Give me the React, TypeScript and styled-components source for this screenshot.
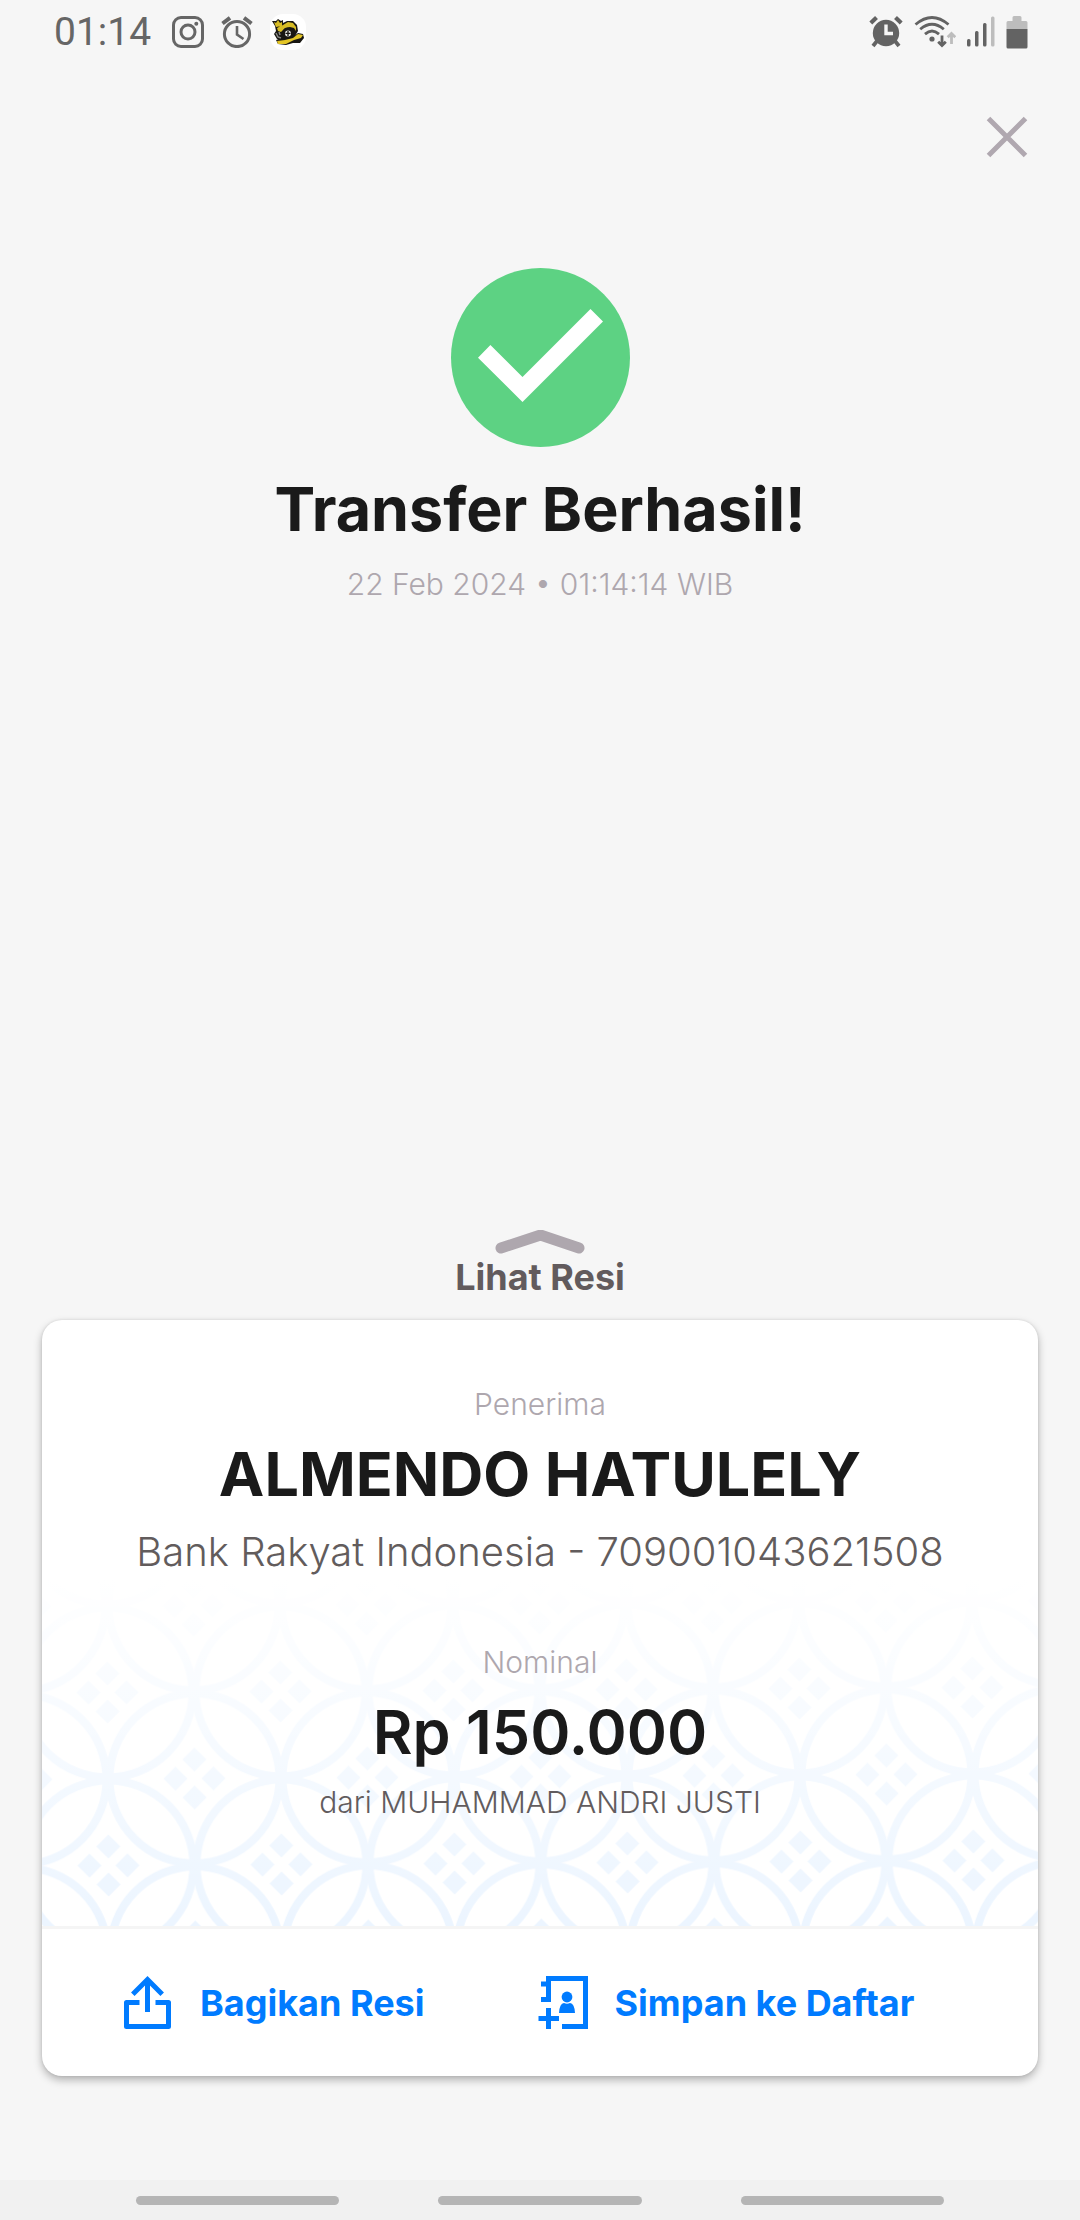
import React from "react";
import styled, { createGlobalStyle } from "styled-components";

const GlobalStyle = createGlobalStyle`
  *, *::before, *::after { box-sizing: border-box; }
  body { margin: 0; background: #f6f6f6; }
  h1, h2, p { margin: 0; }
  button { border: 0; background: none; padding: 0; font: inherit; color: inherit; cursor: pointer; }
  svg { display: block; flex: none; }
`;

const Page = styled.div`
  display: flex;
  flex-direction: column;
  min-height: 100vh;
  background: #f6f6f6;
  color: #1a1a1a;
  font-family: Inter, "Liberation Sans", sans-serif;
`;

const StatusBar = styled.header`
  display: flex;
  align-items: center;
  justify-content: space-between;
  height: 64px;
  padding: 0 52px 0 54px;
  color: #666;
`;

const StatusGroup = styled.div<{ $gap: number }>`
  display: flex;
  align-items: center;
  gap: ${(p) => p.$gap}px;
`;

const Clock = styled.time`
  padding-right: 4px;
  font-family: Roboto, sans-serif;
  font-size: 39px;
  line-height: 48px;
`;

const TopBar = styled.div`
  display: flex;
  justify-content: flex-end;
  padding: 44px 44px 0;
`;

const CloseButton = styled.button`
  display: flex;
  align-items: center;
  justify-content: center;
  width: 58px;
  height: 58px;
`;

const Result = styled.section`
  display: flex;
  flex-direction: column;
  align-items: center;
  flex: 1;
  padding-top: 102px;
  text-align: center;
`;

const Headline = styled.h1<{ $weight: number }>`
  font-size: 61px;
  line-height: 74px;
  font-weight: ${(p) => p.$weight};
`;

const ResultTitle = styled(Headline)`
  margin-top: 24px;
`;

const Caption = styled.p<{ $dark?: boolean }>`
  font-size: 30px;
  line-height: 40px;
  font-weight: 300;
  color: ${(p) => (p.$dark ? "#625c5e" : "#aea7ae")};
`;

const ResultDate = styled(Caption)`
  margin-top: 18px;
`;

const ReceiptToggle = styled.button`
  display: flex;
  flex-direction: column;
  align-items: center;
  align-self: center;
  margin-bottom: 20px;
  font-size: 36px;
  line-height: 46px;
  font-weight: 700;
  color: #625b5d;
`;

const Card = styled.section`
  margin: 0 42px 104px;
  overflow: hidden;
  border-radius: 20px;
  background: #fff;
  box-shadow: 0 4px 9px rgba(0, 0, 0, 0.28), 0 0 3px rgba(0, 0, 0, 0.1);
`;

const Details = styled.div`
  position: relative;
  isolation: isolate;
  display: flex;
  flex-direction: column;
  gap: 62px;
  padding: 64px 24px 104px;
  border-bottom: 3px solid #f5f5f5;
  text-align: center;
`;

const Ornament = styled.svg`
  position: absolute;
  z-index: -1;
  left: 0;
  bottom: 0;
  width: 100%;
  height: 346px;
`;

const DetailGroup = styled.div`
  display: flex;
  flex-direction: column;
  align-items: center;
  gap: 13px;
`;

const BankLine = styled.p`
  font-size: 40px;
  line-height: 56px;
  font-weight: 300;
  color: #625c5c;
`;

const Actions = styled.div`
  display: flex;
  flex-wrap: wrap;
  align-items: center;
  gap: 0 110px;
  min-height: 147px;
  padding: 0 78px;
`;

const ActionButton = styled.button`
  display: flex;
  align-items: center;
  gap: 24px;
  font-size: 36px;
  line-height: 56px;
  font-weight: 700;
  color: #007bff;
`;

const NavBar = styled.nav`
  display: flex;
  align-items: center;
  gap: 99px;
  height: 40px;
  padding: 0 136px;
  background: #f1f1f1;
`;

const NavPill = styled.button`
  flex: 1;
  height: 9px;
  border-radius: 5px;
  background: #b5b5b5;
`;

const InstagramGlyph = () => (
  <svg width="32" height="32" viewBox="0 0 32 32" fill="none" stroke="#666" aria-hidden="true">
    <rect x="1.5" y="1.5" width="29" height="29" rx="7.5" strokeWidth="3" />
    <circle cx="16" cy="16" r="7" strokeWidth="3" />
    <circle cx="24.3" cy="7.8" r="2" fill="#666" stroke="none" />
  </svg>
);

const AlarmOutline = () => (
  <svg width="32" height="32" viewBox="0 0 32 32" fill="none" stroke="#666" aria-hidden="true">
    <circle cx="16" cy="18" r="12.6" strokeWidth="3" />
    <path d="M16 10v8.5l6.5 4.5" strokeWidth="2.6" />
    <path d="M1.5 7.5 9 1.8M30.5 7.5 23 1.8" strokeWidth="4" />
  </svg>
);

const MascotBadge = () => (
  <svg width="36" height="36" viewBox="0 0 36 36" aria-hidden="true">
    <rect width="36" height="36" rx="13" fill="#fff" />
    <path d="M5 12 2 7l4 0 2-2 3 2 2-1 0 3 4-2 6 0 4 4 1 6-3 5 0 3-6 2-7 1-5-3-3-5 2-3z" fill="#191713" />
    <path d="M4 8l2 1 2-3 2 3 2-1 0 4-6 1zM7 14l6-3 5-3 5 1 3 4 0 4-2-3-4-1-5 1-4 4-3-1z" fill="#d8bd26" />
    <path d="M6 19l2 4 3 1M9 18l1 3" fill="none" stroke="#8a8a86" strokeWidth="1.5" />
    <circle cx="18" cy="19" r="5.6" fill="#191713" />
    <circle cx="18" cy="19.4" r="3" fill="#e8e8e4" />
    <path d="M15.500 19.400h5M18 17v5" stroke="#191713" strokeWidth="1.4" />
    <path d="M6 26l8-2 9-1 5-4 5 1 1 4-4 5-7 0-7 2-8-1z" fill="#191713" />
    <path d="M7 27l8-1 8-2 5-4 5 1-2 3-7 2-8 4-8 0z" fill="#e3c526" />
  </svg>
);

const AlarmSolid = () => (
  <svg width="34" height="32" viewBox="0 0 34 32" fill="none" stroke="#636363" aria-hidden="true">
    <circle cx="17" cy="17" r="13.2" fill="#636363" stroke="none" />
    <path d="M1.8 7 7.5 1.6M32.2 7 26.5 1.6" strokeWidth="4.2" />
    <path d="M8 25 4 30M26 25l4 5" strokeWidth="3.8" />
    <path d="M17 8.5V17.5h7" stroke="#f6f6f6" strokeWidth="3.4" />
  </svg>
);

const WifiGlyph = () => (
  <svg width="42" height="34" viewBox="0 0 42 34" fill="none" stroke="#636363" aria-hidden="true">
    <path d="M1.5 9.5Q18-4.600 34.5 9.5M6.200 14.300Q18 4.200 29.800 14.300M11 19.100Q18 12.800 25 19.100" strokeWidth="2.8" />
    <circle cx="18" cy="24" r="2.6" fill="#636363" stroke="none" />
    <path d="M28 20.5v9M24.200 26.800l3.800 3.800 3.800-3.800" strokeWidth="2.8" />
    <path d="M37.500 29v-9M33.700 22.300l3.800-3.800 3.800 3.800" stroke="#bdbdbd" strokeWidth="2.8" />
  </svg>
);

const SignalGlyph = () => (
  <svg width="28" height="32" viewBox="0 0 28 32" aria-hidden="true">
    <rect x="0" y="23" width="3.5" height="7.5" rx="1.5" fill="#636363" />
    <rect x="8" y="15" width="3.5" height="15.5" rx="1.5" fill="#636363" />
    <rect x="16" y="7" width="3.5" height="23.5" rx="1.5" fill="#636363" />
    <rect x="24" y="0.5" width="3.5" height="30" rx="1.5" fill="#bdbdbd" />
  </svg>
);

const BatteryGlyph = () => (
  <svg width="22" height="34" viewBox="0 0 22 34" aria-hidden="true">
    <path d="M6.5 6V2.5Q6.5 1 8 1h6q1.500 0 1.500 1.500V6H20q1.500 0 1.500 1.500V14H.5V7.500Q.5 6 2 6z" fill="#bdbdbd" />
    <path d="M.5 14h21v18q0 1.500-1.500 1.500H2Q.5 33.500.5 32z" fill="#636363" />
  </svg>
);

const CloseGlyph = () => (
  <svg width="42" height="42" viewBox="0 0 42 42" aria-hidden="true">
    <path d="M2.5 2.5l37 37M39.500 2.500l-37 37" stroke="#b0a8b0" strokeWidth="5" />
  </svg>
);

const SuccessMark = () => (
  <svg width="180" height="180" viewBox="0 0 180 180" role="img" aria-label="Berhasil">
    <circle cx="90.5" cy="89.5" r="89.5" fill="#5dd283" />
    <path d="M28 89.700 40.400 77 72.500 109 140.500 41 153 53.500 72.500 134z" fill="#fff" />
  </svg>
);

const ChevronUp = () => (
  <svg width="90" height="24" viewBox="0 0 90 24" fill="none" aria-hidden="true">
    <path d="M6 18 45.500 5 84 18" stroke="#aea7ae" strokeWidth="11" strokeLinecap="round" strokeLinejoin="round" />
  </svg>
);

const ShareGlyph = () => (
  <svg width="56" height="56" viewBox="0 0 56 56" fill="none" stroke="#007bff" strokeWidth="5" aria-hidden="true">
    <path d="M19.500 27.500H6.500V51.500H48.500V27.500H35.500" strokeLinejoin="round" />
    <path d="M27.500 37V5" />
    <path d="M12.800 19.200 27.500 4.500 42.200 19.200" />
  </svg>
);

const AddContactGlyph = () => (
  <svg width="56" height="56" viewBox="0 0 56 56" fill="none" stroke="#007bff" strokeWidth="5" aria-hidden="true">
    <path d="M27 51.500H50.500V3.500H13.500V27M6 9H13.500M6 24.500H16" />
    <path d="M13.500 33V54M3.500 43.500H24" />
    <circle cx="32" cy="22" r="5.4" fill="#007bff" stroke="none" />
    <path d="M24 38Q24.500 28.500 29 28Q32 29.500 35 28Q39.500 28.500 40 38z" fill="#007bff" stroke="none" />
  </svg>
);

const TILE = 173;
const HALF = TILE / 2;
const ringCenters = [
  [HALF, 0],
  [HALF, TILE],
  [0, HALF],
  [TILE, HALF],
];
const gemOffsets = [
  [0, -19],
  [19, 0],
  [0, 19],
  [-19, 0],
];

const BatikOrnament = () => (
  <Ornament aria-hidden="true">
    <defs>
      <pattern
        id="kawung"
        width={TILE}
        height={TILE}
        patternUnits="userSpaceOnUse"
        patternTransform="translate(66 199) rotate(-0.33)"
      >
        {ringCenters.map(([cx, cy]) => (
          <g key={`${cx}-${cy}`}>
            <circle cx={cx} cy={cy} r="85" fill="none" stroke="#ecf5ff" strokeWidth="8" />
            {gemOffsets.map(([dx, dy]) => (
              <path
                key={`${dx}-${dy}`}
                d={`M${cx + dx} ${cy + dy - 12}l12 12-12 12-12-12z`}
                fill="#ecf5ff"
              />
            ))}
          </g>
        ))}
      </pattern>
      <linearGradient id="fade" x1="0" y1="0" x2="0" y2="1">
        <stop offset="0" stopColor="#fff" />
        <stop offset="1" stopColor="#fff" stopOpacity="0" />
      </linearGradient>
    </defs>
    <rect width="100%" height="100%" fill="url(#kawung)" />
    <rect width="100%" height="100%" fill="url(#fade)" />
  </Ornament>
);

export default function App() {
  return (
    <>
      <GlobalStyle />
      <Page>
        <StatusBar>
          <StatusGroup $gap={17}>
            <Clock>01:14</Clock>
            <InstagramGlyph />
            <AlarmOutline />
            <MascotBadge />
          </StatusGroup>
          <StatusGroup $gap={11}>
            <AlarmSolid />
            <WifiGlyph />
            <SignalGlyph />
            <BatteryGlyph />
          </StatusGroup>
        </StatusBar>
        <TopBar>
          <CloseButton type="button" aria-label="Tutup">
            <CloseGlyph />
          </CloseButton>
        </TopBar>
        <Result>
          <SuccessMark />
          <ResultTitle $weight={700}>Transfer Berhasil!</ResultTitle>
          <ResultDate>22 Feb 2024 • 01:14:14 WIB</ResultDate>
        </Result>
        <ReceiptToggle type="button">
          <ChevronUp />
          Lihat Resi
        </ReceiptToggle>
        <Card>
          <Details>
            <BatikOrnament />
            <DetailGroup>
              <Caption>Penerima</Caption>
              <Headline as="h2" $weight={700}>ALMENDO HATULELY</Headline>
              <BankLine>Bank Rakyat Indonesia - 709001043621508</BankLine>
            </DetailGroup>
            <DetailGroup>
              <Caption>Nominal</Caption>
              <Headline as="p" $weight={600}>Rp 150.000</Headline>
              <Caption $dark>dari MUHAMMAD ANDRI JUSTI</Caption>
            </DetailGroup>
          </Details>
          <Actions>
            <ActionButton type="button">
              <ShareGlyph />
              Bagikan Resi
            </ActionButton>
            <ActionButton type="button">
              <AddContactGlyph />
              Simpan ke Daftar
            </ActionButton>
          </Actions>
        </Card>
        <NavBar aria-label="Navigasi sistem">
          <NavPill type="button" aria-label="Aplikasi terbaru" />
          <NavPill type="button" aria-label="Beranda" />
          <NavPill type="button" aria-label="Kembali" />
        </NavBar>
      </Page>
    </>
  );
}
